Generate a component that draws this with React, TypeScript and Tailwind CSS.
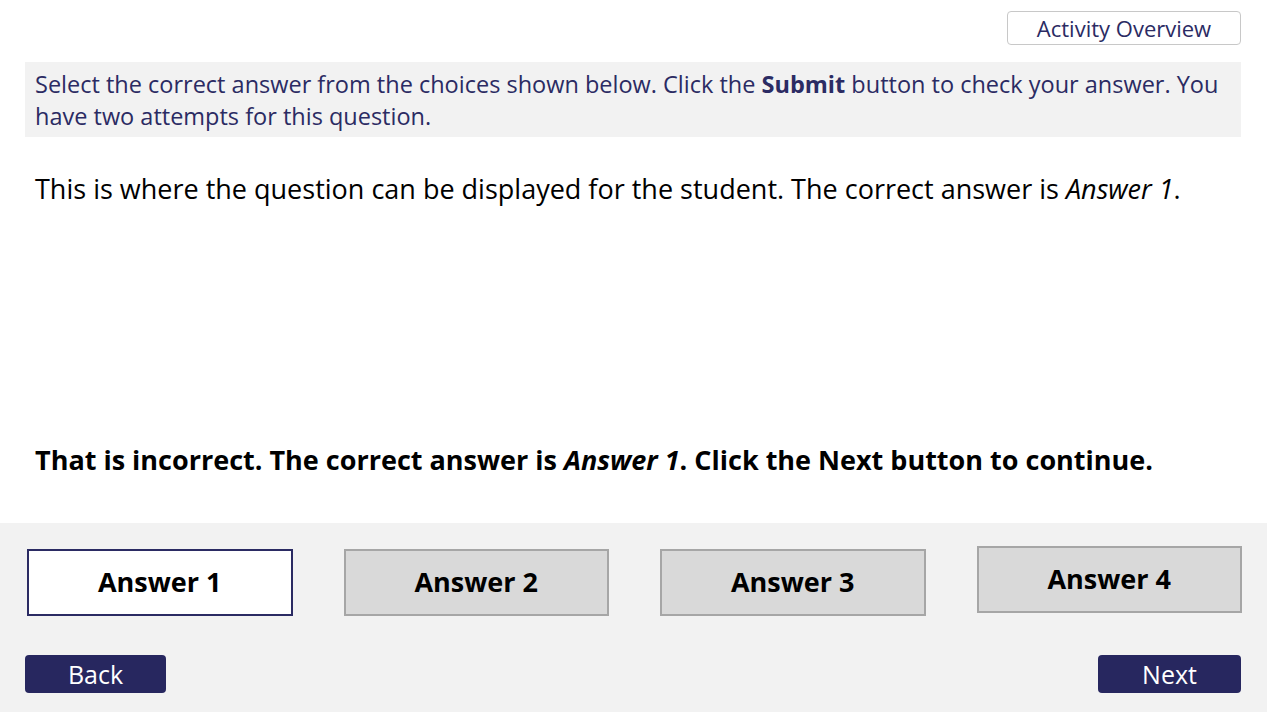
import { useState } from 'react'

const answers = ['Answer 1', 'Answer 2', 'Answer 3', 'Answer 4']

export default function App() {
  const [selected, setSelected] = useState(0)

  return (
    <div className="w-[1267px] h-[712px] bg-white flex flex-col font-['Open_Sans',sans-serif] overflow-hidden">
      <div className="px-[25px] pr-[26px] flex-1 flex flex-col">
        <div className="flex justify-end pt-[11px]">
          <button className="w-[234px] h-[34px] border border-[#c8c8c8] rounded-[4px] text-[#2b2b63] text-[22px] leading-none bg-white">
            Activity Overview
          </button>
        </div>

        <div className="mt-[17px] bg-[#f2f2f2] h-[75px] pl-[10px] pr-[6px] pt-[6px] text-[23.5px] leading-[32px] text-[#2b2b63]">
          Select the correct answer from the choices shown below. Click the <span className="font-bold">Submit</span> button to check your answer. You have two attempts for this question.
        </div>

        <p className="mt-[35px] px-[10px] text-[27px] leading-[34px] text-black">
          This is where the question can be displayed for the student. The correct answer is <span className="italic">Answer 1</span>.
        </p>

        <p className="mt-auto mb-[46px] px-[10px] text-[27px] leading-[34px] font-bold text-black">
          That is incorrect. The correct answer is <span className="italic">Answer 1</span>. Click the Next button to continue.
        </p>
      </div>

      <div className="bg-[#f2f2f2] h-[189px] shrink-0 px-[25px] flex flex-col">
        <div className="flex items-start mt-[26px] pl-[2px]">
          {answers.map((a, i) => (
            <button
              key={a}
              onClick={() => setSelected(i)}
              className={`w-[266px] h-[67px] border-2 text-[27px] font-bold text-black ${
                i === 0 ? '' : i === 3 ? 'ml-[51px] -mt-[3px]' : 'ml-[51px]'
              } ${
                selected === i
                  ? 'bg-white border-[#2b2b63]'
                  : 'bg-[#d9d9d9] border-[#a6a6a6]'
              }`}
            >
              {a}
            </button>
          ))}
        </div>

        <div className="flex justify-between mt-[39px] pr-[1px]">
          <button className="w-[141px] h-[38px] bg-[#27275f] rounded-[4px] text-white text-[25px] leading-none">
            Back
          </button>
          <button className="w-[143px] h-[38px] bg-[#27275f] rounded-[4px] text-white text-[25px] leading-none">
            Next
          </button>
        </div>
      </div>
    </div>
  )
}
